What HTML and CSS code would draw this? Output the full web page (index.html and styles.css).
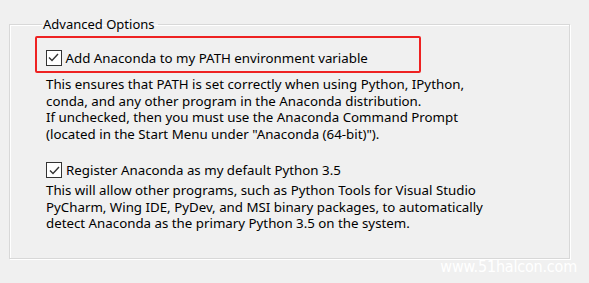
FILE: index.html
```html
<!DOCTYPE html>
<html lang="en">
<head>
    <meta charset="UTF-8">
    <title>Advanced Options</title>
    <link rel="stylesheet" href="styles.css">
</head>
<body>
    <div class="page">
        <fieldset class="group">
            <legend>Advanced Options</legend>
            <div class="option highlight">
                <label class="check">
                    <span class="box">
                        <svg width="13" height="13" viewBox="0 0 13 13"><path d="M2 6.5 L5 9.5 L11 3" fill="none" stroke="#333" stroke-width="1.4"/></svg>
                    </span>
                    Add Anaconda to my PATH environment variable
                </label>
            </div>
            <p class="desc">
                This ensures that PATH is set correctly when using Python, IPython,<br>
                conda, and any other program in the Anaconda distribution.<br>
                If unchecked, then you must use the Anaconda Command Prompt<br>
                (located in the Start Menu under "Anaconda (64-bit)").
            </p>
            <div class="option">
                <label class="check">
                    <span class="box">
                        <svg width="13" height="13" viewBox="0 0 13 13"><path d="M2 6.5 L5 9.5 L11 3" fill="none" stroke="#333" stroke-width="1.4"/></svg>
                    </span>
                    Register Anaconda as my default Python 3.5
                </label>
            </div>
            <p class="desc tight">
                This will allow other programs, such as Python Tools for Visual Studio<br>
                PyCharm, Wing IDE, PyDev, and MSI binary packages, to automatically<br>
                detect Anaconda as the primary Python 3.5 on the system.
            </p>
        </fieldset>
        <div class="watermark">www.51halcon.com</div>
    </div>
</body>
</html>
```

FILE: styles.css
```css
body {
    margin: 0;
    background-color: #f0f0f0;
    font-family: "Noto Sans", "Open Sans", sans-serif;
    font-size: 13.3px;
    color: #000;
}
.page {
    position: relative;
    width: 589px;
    height: 283px;
    padding: 17px 0 0 9px;
    box-sizing: border-box;
}
.group {
    margin: 0;
    width: 561px;
    height: 242px;
    box-sizing: border-box;
    padding: 4px 0 0 25px;
    border: 1px solid #d8d8d8;
    box-shadow: inset 1px 1px 0 #fff, 1px 1px 0 #fff;
}
.group legend {
    margin-left: 7px;
    padding: 0 3px 0 1px;
    line-height: 15px;
    font-size: 13px;
}
.option {
    display: flex;
    align-items: center;
    padding: 0 0 0 11px;
}
.highlight {
    width: 386px;
    height: 37px;
    box-sizing: border-box;
    border: 2.5px solid #ee2222;
    border-radius: 2px;
    padding: 10px 0 4px 8.5px;
}
.check {
    display: flex;
    align-items: center;
    gap: 4px;
}
.box {
    display: flex;
    width: 14px;
    height: 14px;
    border: 1px solid #333;
    background-color: #fff;
    align-items: center;
    justify-content: center;
}
.desc {
    margin: 3px 0 19px 11px;
    line-height: 16.5px;
}
.desc.tight {
    margin-top: 3px;
}
.watermark {
    position: absolute;
    right: 12px;
    bottom: 7px;
    color: #fff;
    font-family: "DejaVu Sans Condensed", "DejaVu Sans", sans-serif;
    font-size: 16px;
    letter-spacing: -0.2px;
}
```
